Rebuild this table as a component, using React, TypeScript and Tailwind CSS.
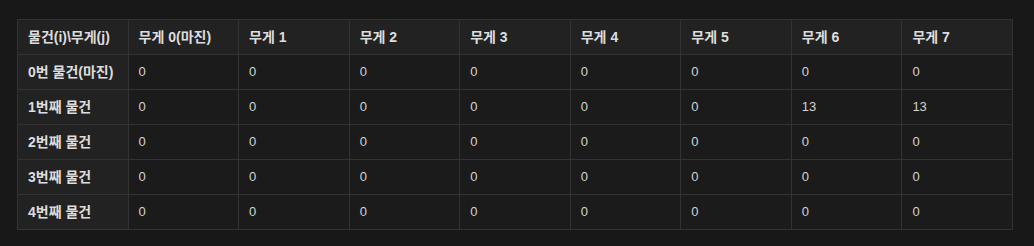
import React from 'react';

const HEADERS = ['물건(i)\\무게(j)', '무게 0(마진)', '무게 1', '무게 2', '무게 3', '무게 4', '무게 5', '무게 6', '무게 7'];

const ROWS: { label: string; values: number[] }[] = [
  { label: '0번 물건(마진)', values: [0, 0, 0, 0, 0, 0, 0, 0] },
  { label: '1번째 물건', values: [0, 0, 0, 0, 0, 0, 13, 13] },
  { label: '2번째 물건', values: [0, 0, 0, 0, 0, 0, 0, 0] },
  { label: '3번째 물건', values: [0, 0, 0, 0, 0, 0, 0, 0] },
  { label: '4번째 물건', values: [0, 0, 0, 0, 0, 0, 0, 0] },
];

export default function App() {
  return (
    <div
      className="min-h-[246px] bg-[#181818] pt-[19px] pl-[17px] pr-[21px]"
      style={{ fontFamily: '"Liberation Sans", "Noto Sans CJK KR", sans-serif' }}
    >
      <table className="w-full table-fixed border-collapse text-[14px]">
        <thead>
          <tr className="h-[35px] bg-[#222222]">
            {HEADERS.map((h) => (
              <th key={h} className="border border-[#333333] px-[10px] text-left font-bold text-[#dddddd]">
                {h}
              </th>
            ))}
          </tr>
        </thead>
        <tbody>
          {ROWS.map((row) => (
            <tr key={row.label} className="h-[35px]">
              <th className="border border-[#333333] bg-[#222222] px-[10px] text-left font-bold text-[#dddddd]">
                {row.label}
              </th>
              {row.values.map((v, i) => (
                <td key={i} className="border border-[#333333] bg-[#1b1b1b] px-[10px] text-[13px] text-[#d4d4d4]">
                  {v}
                </td>
              ))}
            </tr>
          ))}
        </tbody>
      </table>
    </div>
  );
}
